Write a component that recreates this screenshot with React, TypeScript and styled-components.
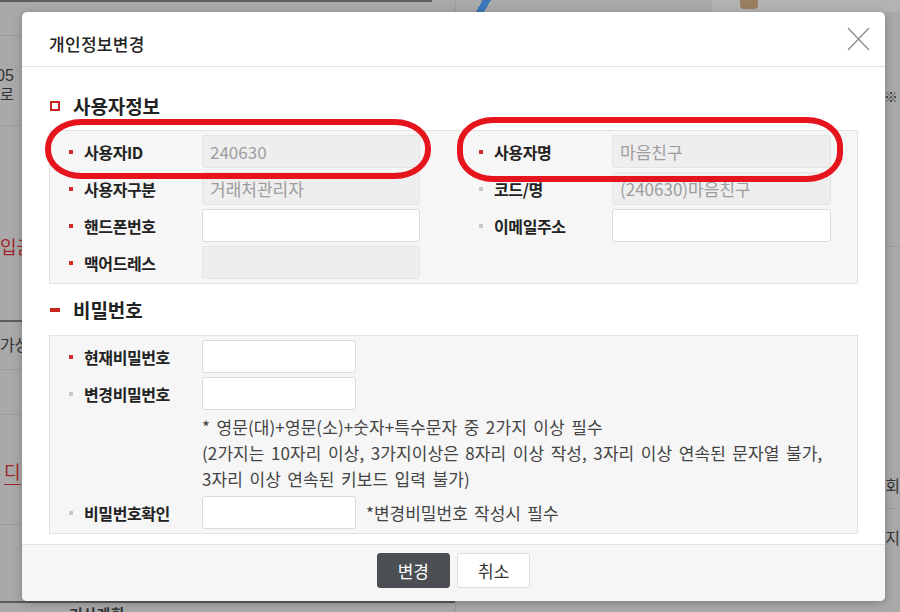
import React from "react";
import styled, { createGlobalStyle } from "styled-components";

const GlobalStyle = createGlobalStyle`
  html, body { margin: 0; padding: 0; }
  body { font-family: "Noto Sans CJK KR", "Noto Sans", sans-serif; }
  * { box-sizing: border-box; }
`;

const FONT = `"Noto Sans CJK KR", "Noto Sans", sans-serif`;

/* ---------- backdrop page (dimmed) ---------- */
const Screen = styled.div`
  position: relative;
  width: 900px;
  height: 612px;
  overflow: hidden;
  background: #a9a9a9;
  display: flex;
  font-family: ${FONT};
`;

const BgLeft = styled.div`
  width: 456px;
  flex: none;
  border-right: 1px solid #9c9c9c;
  display: flex;
  flex-direction: column;
`;

const BgRight = styled.div`
  flex: 1;
  display: flex;
  flex-direction: column;
`;

const TopRule = styled.div`
  width: 432px;
  height: 2px;
  background: #5c5c5c;
  flex: none;
`;

const BgRow = styled.div<{ $h: number; $line?: "light" | "dark"; $pt?: number; $align?: "start" | "end" }>`
  height: ${(p) => p.$h}px;
  flex: none;
  padding-top: ${(p) => p.$pt ?? 0}px;
  border-bottom: ${(p) =>
    p.$line === "dark" ? "2px solid #5c5c5c" : p.$line === "light" ? "1px solid #9d9d9d" : "none"};
  display: flex;
  flex-direction: column;
  align-items: ${(p) => (p.$align === "end" ? "flex-end" : "flex-start")};
`;

const BgText = styled.span<{ $red?: boolean; $under?: boolean; $bold?: boolean; $size?: number; $latin?: boolean }>`
  font-family: ${(p) => (p.$latin ? `"Liberation Sans", sans-serif` : FONT)};
  font-size: ${(p) => p.$size ?? 16}px;
  line-height: ${(p) => (p.$latin ? 16 : 20)}px;
  color: ${(p) => (p.$red ? "#a0282a" : "#333")};
  font-weight: ${(p) => (p.$bold ? 700 : 400)};
  text-decoration: ${(p) => (p.$under ? "underline" : "none")};
  text-underline-offset: 5px;
  white-space: nowrap;
`;

const BgBanner = styled.div`
  height: 12px;
  flex: none;
  display: flex;
  align-items: flex-start;
`;

const BgLogo = styled.div`
  width: 20px;
  height: 12px;
  margin-left: 16px;
  background: linear-gradient(120deg, transparent 40%, #3d78b8 40%, #3d78b8 70%, transparent 70%);
`;

const BgLight = styled.div`
  margin-left: auto;
  width: 188px;
  height: 12px;
  background: #b3b3b3;
  display: flex;
  padding-left: 28px;
`;

const BgBox = styled.div`
  width: 18px;
  height: 9px;
  background: #9a7f60;
  border-radius: 0 0 4px 4px;
`;

/* ---------- modal ---------- */
const Modal = styled.div`
  position: absolute;
  left: 22px;
  top: 12px;
  width: 863px;
  height: 589px;
  background: #fff;
  border-radius: 5px;
  box-shadow: 0 2px 10px rgba(0, 0, 0, 0.25);
  display: flex;
  flex-direction: column;
  overflow: hidden;
`;

const Header = styled.div`
  height: 55px;
  flex: none;
  border-bottom: 1px solid #e3e3e3;
  display: flex;
  align-items: center;
  justify-content: space-between;
  padding: 0 15px 0 27px;
`;

const Title = styled.h2`
  margin: 0;
  padding-top: 10px;
  font-size: 17px;
  line-height: 22px;
  font-weight: 500;
  letter-spacing: 0.3px;
  color: #222;
`;

const CloseButton = styled.button`
  width: 23px;
  height: 24px;
  padding: 0;
  border: none;
  background: transparent;
  display: flex;
  cursor: pointer;
`;

const Body = styled.div`
  flex: 1;
  min-height: 0;
  padding: 27px 27px 14px;
  display: flex;
  flex-direction: column;
`;

const SectionTitle = styled.h3<{ $gapTop?: number }>`
  margin: ${(p) => p.$gapTop ?? 0}px 0 0;
  height: 24px;
  flex: none;
  display: flex;
  align-items: center;
  gap: 13px;
  padding-left: 1px;
  font-size: 19px;
  line-height: 24px;
  font-weight: 700;
  letter-spacing: -0.1px;
  color: #222;
`;

const SquareIcon = styled.span`
  width: 10px;
  height: 10px;
  border: 2px solid #c9241f;
  flex: none;
`;

const DashIcon = styled.span`
  width: 10px;
  height: 4px;
  background: #c9241f;
  flex: none;
`;

const Box = styled.div<{ $mt: number }>`
  margin-top: ${(p) => p.$mt}px;
  flex: none;
  background: #f6f6f6;
  border: 1px solid #e3e3e3;
  padding: 4px 26px 4px 19px;
`;

const InfoGrid = styled(Box)`
  display: grid;
  grid-template-columns: 351px 352px;
  grid-auto-rows: 33px;
  column-gap: 59px;
  row-gap: 4px;
`;

const PwGrid = styled(Box)`
  display: grid;
  grid-template-columns: 133px 154px 1fr;
  grid-template-rows: 33px 33px 78px 33px;
  row-gap: 4px;
  align-items: center;
`;

const Field = styled.div`
  display: flex;
  align-items: center;
  min-width: 0;
`;

const Label = styled.label<{ $req?: boolean }>`
  width: 133px;
  flex: none;
  display: flex;
  align-items: center;
  gap: 11px;
  font-size: 16px;
  font-weight: 700;
  letter-spacing: -0.4px;
  color: #222;
  white-space: nowrap;
  &::before {
    content: "";
    width: 4px;
    height: 4px;
    flex: none;
    background: ${(p) => (p.$req ? "#d22a24" : "#c8c8c8")};
  }
`;

const Input = styled.input`
  flex: 1;
  min-width: 0;
  width: 100%;
  height: 33px;
  border: 1px solid #dadada;
  border-radius: 3px;
  background: #fff;
  padding: 0 7px;
  font-family: ${FONT};
  font-size: 17px;
  color: #333;
  outline: none;
  &:disabled {
    background: #eeeeee;
    border-color: #e4e4e4;
    color: #9d9d9d;
    -webkit-text-fill-color: #9d9d9d;
    opacity: 1;
  }
`;

const Note = styled.div`
  grid-column: 2 / -1;
  align-self: stretch;
  display: flex;
  flex-direction: column;
`;

const NoteLine = styled.div`
  height: 26px;
  font-size: 17px;
  line-height: 26px;
  color: #444;
  word-spacing: 2.5px;
  letter-spacing: 0.1px;
  white-space: nowrap;
`;

const Hint = styled.span`
  padding-left: 10px;
  font-size: 17px;
  color: #444;
  word-spacing: 2.5px;
  white-space: nowrap;
`;

const Footer = styled.div`
  height: 57px;
  flex: none;
  border-top: 1px solid #e3e3e3;
  background: #f6f6f6;
  display: flex;
  justify-content: center;
  align-items: flex-start;
  gap: 7px;
  padding-top: 8px;
`;

const Button = styled.button<{ $primary?: boolean }>`
  height: 35px;
  padding: 0 20px;
  border-radius: 3px;
  border: 1px solid ${(p) => (p.$primary ? "#4b4e52" : "#dedede")};
  background: ${(p) => (p.$primary ? "#4b4e52" : "#fff")};
  color: ${(p) => (p.$primary ? "#fff" : "#333")};
  font-family: ${FONT};
  font-size: 17px;
  cursor: pointer;
`;

const Annotation = styled.div<{ $l: number; $t: number; $w: number; $h: number }>`
  position: absolute;
  left: ${(p) => p.$l}px;
  top: ${(p) => p.$t}px;
  width: ${(p) => p.$w}px;
  height: ${(p) => p.$h}px;
  border: 6px solid #e6141d;
  border-radius: 36px / 29px;
  pointer-events: none;
`;

type InfoField = { label: string; req: boolean; value?: string; locked: boolean } | null;

const infoFields: InfoField[] = [
  { label: "사용자ID", req: true, value: "240630", locked: true },
  { label: "사용자명", req: true, value: "마음친구", locked: true },
  { label: "사용자구분", req: true, value: "거래처관리자", locked: true },
  { label: "코드/명", req: false, value: "(240630)마음친구", locked: true },
  { label: "핸드폰번호", req: true, locked: false },
  { label: "이메일주소", req: false, locked: false },
  { label: "맥어드레스", req: true, value: "", locked: true },
  null,
];

const notes = [
  "* 영문(대)+영문(소)+숫자+특수문자 중 2가지 이상 필수",
  "(2가지는 10자리 이상, 3가지이상은 8자리 이상 작성, 3자리 이상 연속된 문자열 불가,",
  "3자리 이상 연속된 키보드 입력 불가)",
];

export default function App() {
  return (
    <>
      <GlobalStyle />
      <Screen>
        <BgLeft>
          <TopRule />
          <BgRow $h={34} $line="light" />
          <BgRow $h={90} $line="light" $pt={32}>
            <BgText $latin $size={16} style={{ marginLeft: -4 }}>05</BgText>
            <BgText $size={15}>로</BgText>
          </BgRow>
          <BgRow $h={196} $line="dark" $pt={110}>
            <BgText $red $size={18}>입금</BgText>
          </BgRow>
          <BgRow $h={48} $line="light" $pt={12}>
            <BgText>가상</BgText>
          </BgRow>
          <BgRow $h={45} $line="light" />
          <BgRow $h={110} $line="light" $pt={46}>
            <BgText $red $under $size={18} style={{ paddingLeft: 4 }}>디</BgText>
          </BgRow>
          <BgRow $h={78} $line="dark" />
          <BgRow $h={20} $pt={1}>
            <BgText $bold $size={15} style={{ paddingLeft: 69 }}>기사계획</BgText>
          </BgRow>
        </BgLeft>
        <BgRight>
          <BgBanner>
            <BgLogo />
            <BgLight>
              <BgBox />
            </BgLight>
          </BgBanner>
          <BgRow $h={235} $line="light" $pt={74} $align="end">
            <BgText $size={14} style={{ paddingRight: 2 }}>※</BgText>
          </BgRow>
          <BgRow $h={262} $line="light" $pt={228} $align="end">
            <BgText>회</BgText>
          </BgRow>
          <BgRow $h={60} $pt={18} $align="end">
            <BgText>지</BgText>
          </BgRow>
        </BgRight>

        <Modal>
          <Header>
            <Title>개인정보변경</Title>
            <CloseButton aria-label="닫기">
              <svg width="23" height="24" viewBox="0 0 23 24">
                <path d="M1 1 L22 23 M22 1 L1 23" stroke="#8f8f8f" strokeWidth="1.4" fill="none" />
              </svg>
            </CloseButton>
          </Header>

          <Body>
            <SectionTitle>
              <SquareIcon />
              사용자정보
            </SectionTitle>
            <InfoGrid $mt={12}>
              {infoFields.map((f, i) =>
                f ? (
                  <Field key={i}>
                    <Label $req={f.req}>{f.label}</Label>
                    <Input disabled={f.locked} defaultValue={f.value ?? ""} />
                  </Field>
                ) : (
                  <Field key={i} />
                )
              )}
            </InfoGrid>

            <SectionTitle $gapTop={14}>
              <DashIcon />
              비밀번호
            </SectionTitle>
            <PwGrid $mt={13}>
              <Label $req>현재비밀번호</Label>
              <Input type="password" />
              <span />
              <Label>변경비밀번호</Label>
              <Input type="password" />
              <span />
              <Note>
                {notes.map((n) => (
                  <NoteLine key={n}>{n}</NoteLine>
                ))}
              </Note>
              <Label>비밀번호확인</Label>
              <Input type="password" />
              <Hint>*변경비밀번호 작성시 필수</Hint>
            </PwGrid>
          </Body>

          <Footer>
            <Button $primary>변경</Button>
            <Button>취소</Button>
          </Footer>

          <Annotation $l={23} $t={107} $w={386} $h={60} />
          <Annotation $l={435} $t={105} $w={386} $h={65} />
        </Modal>
      </Screen>
    </>
  );
}
